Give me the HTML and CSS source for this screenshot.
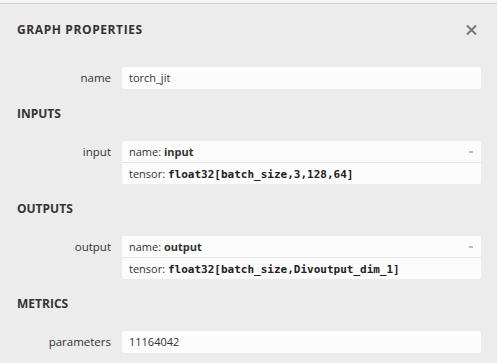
FILE: index.html
```html
<!DOCTYPE html>
<html lang="en">
<head>
  <meta charset="UTF-8" />
  <title>Graph Properties</title>
  <link rel="stylesheet" href="styles.css">
</head>
<body>
  <div class="sidebar">
    <div class="sidebar-header">
      <span class="sidebar-title">GRAPH PROPERTIES</span>
      <span class="sidebar-close">
        <svg width="11" height="10" viewBox="0 0 11 10">
          <path d="M1 0.5 L10 9.5 M10 0.5 L1 9.5" stroke="#777" stroke-width="2" fill="none" />
        </svg>
      </span>
    </div>

    <div class="sidebar-content">
      <div class="item">
        <div class="item-name">name</div>
        <div class="item-value">
          <div class="value-line">torch_jit</div>
        </div>
      </div>

      <div class="section-title">INPUTS</div>
      <div class="item">
        <div class="item-name">input</div>
        <div class="item-value">
          <div class="value-line">name: <b>input</b><span class="toggle"></span></div>
          <div class="value-line">tensor: <code>float32[batch_size,3,128,64]</code></div>
        </div>
      </div>

      <div class="section-title">OUTPUTS</div>
      <div class="item">
        <div class="item-name">output</div>
        <div class="item-value">
          <div class="value-line">name: <b>output</b><span class="toggle"></span></div>
          <div class="value-line">tensor: <code>float32[batch_size,Divoutput_dim_1]</code></div>
        </div>
      </div>

      <div class="section-title">METRICS</div>
      <div class="item">
        <div class="item-name">parameters</div>
        <div class="item-value">
          <div class="value-line">11164042</div>
        </div>
      </div>
    </div>
  </div>
</body>
</html>
```

FILE: styles.css
```css
html, body {
  margin: 0;
  padding: 0;
}

body {
  font-family: 'Open Sans', sans-serif;
  font-size: 11px;
  color: #333;
  background-color: #f6f6f6;
  height: 363px;
  overflow: hidden;
}

.sidebar {
  margin-top: 3px;
  border-top: 1px solid #cfcfcf;
  background-color: #ececec;
  height: 359px;
}

.sidebar-header {
  display: flex;
  align-items: center;
  justify-content: space-between;
  padding: 15px 20px 0 17px;
  height: 20px;
}

.sidebar-title {
  font-weight: 700;
  font-size: 12px;
  letter-spacing: 0.6px;
  color: #333;
}

.sidebar-close {
  display: flex;
  margin-top: 1px;
}

.sidebar-content {
  padding: 28px 16px 0 17px;
}

.section-title {
  font-weight: 700;
  font-size: 12px;
  height: 16px;
  line-height: 16px;
  margin: 17px 0 19px 0;
}

.item {
  display: flex;
  gap: 11px;
  font-size: 11.5px;
}

.item-name {
  width: 94px;
  flex: none;
  text-align: right;
  line-height: 21px;
}

.item-value {
  flex: 1;
  background-color: #fcfcfc;
  border-radius: 2px;
}

.value-line {
  position: relative;
  height: 21px;
  line-height: 21px;
  padding: 0 7px;
  font-size: 11px;
  white-space: nowrap;
}

.value-line + .value-line {
  border-top: 1px solid #e6e6e6;
}

.item:first-child .value-line,
.item:last-child .value-line {
  height: 22px;
  line-height: 22px;
}

.value-line b {
  font-weight: 700;
}

.value-line code {
  font-family: 'DejaVu Sans Mono', monospace;
  font-weight: 700;
  font-size: 11px;
  color: #222;
}

.toggle {
  position: absolute;
  right: 8px;
  top: 10px;
  width: 4px;
  height: 2px;
  background-color: #bbb;
}
```
